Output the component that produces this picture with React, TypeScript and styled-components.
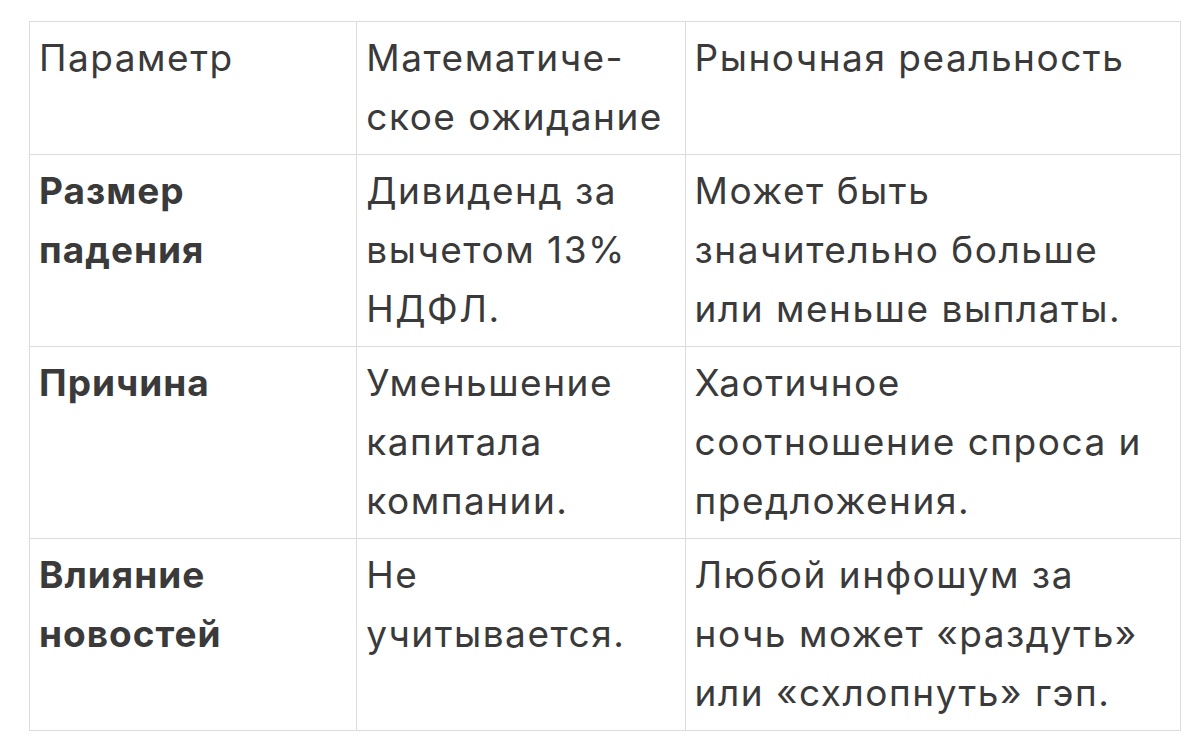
import React from 'react';
import styled, { createGlobalStyle } from 'styled-components';

const GlobalStyle = createGlobalStyle`
  html, body {
    margin: 0;
    padding: 0;
    background: #ffffff;
  }
  body {
    font-family: Inter, "Noto Sans", "Liberation Sans", sans-serif;
    color: #3a3a3a;
  }
`;

interface Row {
  param: string;
  expected: React.ReactNode;
  market: React.ReactNode;
}

const rows: Row[] = [
  {
    param: 'Размер падения',
    expected: 'Дивиденд за вычетом 13% НДФЛ.',
    market: 'Может быть значительно больше или меньше выплаты.',
  },
  {
    param: 'Причина',
    expected: 'Уменьшение капитала компании.',
    market: 'Хаотичное соотношение спроса и предложения.',
  },
  {
    param: 'Влияние новостей',
    expected: 'Не учитывается.',
    market: 'Любой инфошум за ночь может «раздуть» или «схлопнуть» гэп.',
  },
];

const App: React.FC = () => {
  return (
    <>
      <GlobalStyle />
      <Page>
        <Table>
          <colgroup>
            <col style={{ width: 327 }} />
            <col style={{ width: 328 }} />
            <col style={{ width: 495 }} />
          </colgroup>
          <thead>
            <tr>
              <HeadCell>Параметр</HeadCell>
              <HeadCell>
                Математиче-
                <br />
                ское ожидание
              </HeadCell>
              <HeadCell>Рыночная реальность</HeadCell>
            </tr>
          </thead>
          <tbody>
            {rows.map((row) => (
              <tr key={row.param}>
                <Cell $bold>{row.param}</Cell>
                <Cell>{row.expected}</Cell>
                <Cell>{row.market}</Cell>
              </tr>
            ))}
          </tbody>
        </Table>
      </Page>
    </>
  );
};

export default App;

const Page = styled.div`
  padding: 21px 0 0 29px;
  width: 1200px;
  height: 755px;
  box-sizing: border-box;
`;

const Table = styled.table`
  border-collapse: collapse;
  table-layout: fixed;
  width: 1152px;
`;

const HeadCell = styled.th`
  border: 1.5px solid #dcdcdc;
  padding: 6px 14px 8px 9px;
  font-size: 37px;
  line-height: 59px;
  font-weight: 400;
  text-align: left;
  vertical-align: top;
  letter-spacing: 1.5px;
`;

const Cell = styled.td<{ $bold?: boolean }>`
  border: 1.5px solid #dcdcdc;
  padding: 6px 14px 8px 9px;
  font-size: 37px;
  line-height: 59px;
  font-weight: ${({ $bold }) => ($bold ? 700 : 400)};
  text-align: left;
  vertical-align: top;
  letter-spacing: ${({ $bold }) => ($bold ? '1px' : '1.5px')};
`;
